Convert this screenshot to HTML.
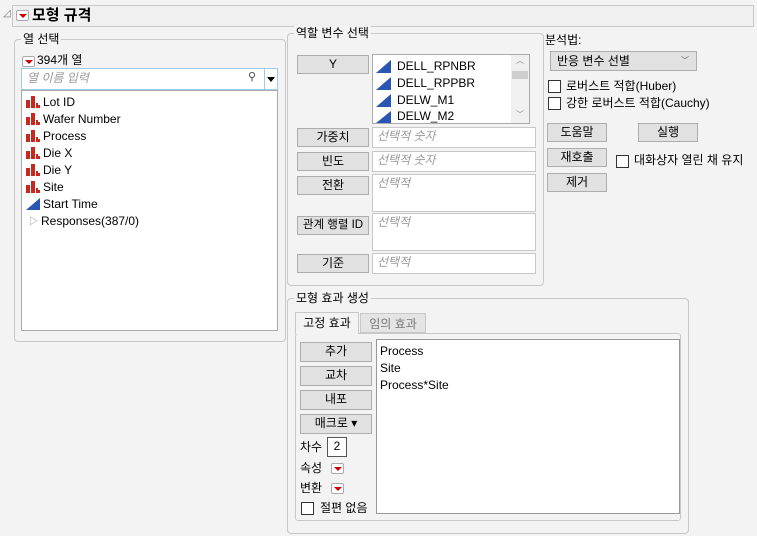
<!DOCTYPE html>
<html><head><meta charset="utf-8"><style>
*{box-sizing:border-box;margin:0;padding:0}
body{width:757px;height:536px;background:#f3f3f3;font-family:"Liberation Sans","Noto Sans CJK KR",sans-serif;font-size:12px;color:#000;position:relative;overflow:hidden}
.a{position:absolute}
.grp{position:absolute;border:1px solid #c8c8c8;border-radius:4px}
.lg{position:absolute;background:#f3f3f3;padding:0 2px;top:-8px;left:6px;font-size:12px;line-height:14px}
.btn{position:absolute;background:#e1e1e1;border:1px solid #adadad;text-align:center;line-height:16px;font-size:12px}
.inp{position:absolute;background:#fff;border:1px solid #c8c8c8;color:#9a9a9a;font-style:italic;padding-left:4px;line-height:17px}
.cb{position:absolute;width:13px;height:13px;border:1px solid #333;background:#fff}
.tri{display:inline-block;width:13px;height:11px;border:1px solid #aaa;border-radius:2px;background:#fff;position:relative;vertical-align:middle}
.tri:after{content:"";position:absolute;left:2px;top:3px;border-left:4px solid transparent;border-right:4px solid transparent;border-top:4px solid #c00}
.nom{position:absolute;left:4px;width:14px;height:12px}
.it{position:absolute;left:21px;line-height:16px}
</style></head><body>
<div class="a" style="left:3px;top:8px;font-size:10px;color:#777">◿</div>
<div class="a" style="left:12px;top:5px;width:742px;height:22px;border:1px solid #c8c8c8;background:#f0f0f0"></div>
<div class="a" style="left:16px;top:8px"><span class="tri"></span></div>
<div class="a" style="left:32px;top:6px;font-size:15px;font-weight:bold;line-height:20px">모형 규격</div>

<div class="grp" style="left:14px;top:39px;width:272px;height:303px"><div class="lg">열 선택</div></div>
<div class="a" style="left:22px;top:54px"><span class="tri"></span></div>
<div class="a" style="left:37px;top:52px;line-height:16px">394개 열</div>
<div class="a" style="left:21px;top:68px;width:257px;height:22px;background:#fff;border:1px solid #9ccbe8"></div>
<div class="a" style="left:27px;top:70px;color:#999;font-style:italic;line-height:16px">열 이름 입력</div>
<div class="a" style="left:248px;top:70px;color:#444;font-size:11px">⚲</div>
<div class="a" style="left:264px;top:69px;width:1px;height:20px;background:#9ccbe8"></div>
<div class="a" style="left:267px;top:77px;border-left:4px solid transparent;border-right:4px solid transparent;border-top:5px solid #000"></div>
<div class="a" style="left:21px;top:90px;width:257px;height:241px;background:#fff;border:1px solid #aaa">
<svg class="nom" style="top:5px" viewBox="0 0 14 12"><path d="M0 4h4v8H0zM5 0h4v12H5zM10 7h2v5h-2zM12 9h2v3h-2z" fill="#c8281e"/></svg><div class="it" style="top:3px">Lot ID</div>
<svg class="nom" style="top:22px" viewBox="0 0 14 12"><path d="M0 4h4v8H0zM5 0h4v12H5zM10 7h2v5h-2zM12 9h2v3h-2z" fill="#c8281e"/></svg><div class="it" style="top:20px">Wafer Number</div>
<svg class="nom" style="top:39px" viewBox="0 0 14 12"><path d="M0 4h4v8H0zM5 0h4v12H5zM10 7h2v5h-2zM12 9h2v3h-2z" fill="#c8281e"/></svg><div class="it" style="top:37px">Process</div>
<svg class="nom" style="top:56px" viewBox="0 0 14 12"><path d="M0 4h4v8H0zM5 0h4v12H5zM10 7h2v5h-2zM12 9h2v3h-2z" fill="#c8281e"/></svg><div class="it" style="top:54px">Die X</div>
<svg class="nom" style="top:73px" viewBox="0 0 14 12"><path d="M0 4h4v8H0zM5 0h4v12H5zM10 7h2v5h-2zM12 9h2v3h-2z" fill="#c8281e"/></svg><div class="it" style="top:71px">Die Y</div>
<svg class="nom" style="top:90px" viewBox="0 0 14 12"><path d="M0 4h4v8H0zM5 0h4v12H5zM10 7h2v5h-2zM12 9h2v3h-2z" fill="#c8281e"/></svg><div class="it" style="top:88px">Site</div>
<svg class="nom" style="top:107px" viewBox="0 0 14 12"><path d="M0 12L14 0v12z" fill="#2a55b0"/></svg><div class="it" style="top:105px">Start Time</div>
<div class="a" style="left:7px;top:123px;color:#888;font-size:9px">▷</div><div class="it" style="top:122px;left:19px">Responses(387/0)</div>
</div>

<div class="grp" style="left:287px;top:33px;width:257px;height:253px"><div class="lg">역할 변수 선택</div></div>
<div class="btn" style="left:297px;top:55px;width:72px;height:19px">Y</div>
<div class="a" style="left:372px;top:54px;width:158px;height:70px;background:#fff;border:1px solid #aaa;overflow:hidden">
<div class="a" style="right:0;top:0;width:18px;height:68px;background:#f0f0f0"></div>
<div class="a" style="right:1px;top:16px;width:16px;height:8px;background:#cdcdcd"></div>
<div class="a" style="right:5px;top:0;font-size:8px;color:#888">︿</div>
<div class="a" style="right:5px;top:54px;font-size:8px;color:#888">﹀</div>
<svg class="a" style="left:3px;top:5px" width="15" height="13"><path d="M0 13L15 0v13z" fill="#2a55b0"/></svg><div class="a" style="left:24px;top:3px;line-height:16px">DELL_RPNBR</div>
<svg class="a" style="left:3px;top:22px" width="15" height="13"><path d="M0 13L15 0v13z" fill="#2a55b0"/></svg><div class="a" style="left:24px;top:20px;line-height:16px">DELL_RPPBR</div>
<svg class="a" style="left:3px;top:39px" width="15" height="13"><path d="M0 13L15 0v13z" fill="#2a55b0"/></svg><div class="a" style="left:24px;top:37px;line-height:16px">DELW_M1</div>
<svg class="a" style="left:3px;top:56px" width="15" height="12"><path d="M0 12L15 0v12z" fill="#2a55b0"/></svg><div class="a" style="left:24px;top:53px;line-height:16px">DELW_M2</div>
</div>
<div class="btn" style="left:297px;top:128px;width:72px;height:19px">가중치</div><div class="inp" style="left:372px;top:127px;width:164px;height:21px">선택적 숫자</div>
<div class="btn" style="left:297px;top:152px;width:72px;height:19px">빈도</div><div class="inp" style="left:372px;top:151px;width:164px;height:21px">선택적 숫자</div>
<div class="btn" style="left:297px;top:176px;width:72px;height:19px">전환</div><div class="inp" style="left:372px;top:174px;width:164px;height:38px">선택적</div>
<div class="btn" style="left:297px;top:216px;width:72px;height:19px;font-size:11.5px;white-space:nowrap">관계 행렬 ID</div><div class="inp" style="left:372px;top:213px;width:164px;height:38px">선택적</div>
<div class="btn" style="left:297px;top:254px;width:72px;height:19px">기준</div><div class="inp" style="left:372px;top:253px;width:164px;height:21px">선택적</div>

<div class="a" style="left:545px;top:32px;line-height:16px">분석법:</div>
<div class="btn" style="left:550px;top:51px;width:147px;height:20px;text-align:left;padding-left:6px;line-height:18px">반응 변수 선별<span class="a" style="right:7px;top:0;font-size:8px;color:#555">﹀</span></div>
<div class="cb" style="left:548px;top:80px"></div><div class="a" style="left:566px;top:78px;line-height:16px">로버스트 적합(Huber)</div>
<div class="cb" style="left:548px;top:97px"></div><div class="a" style="left:566px;top:95px;line-height:16px">강한 로버스트 적합(Cauchy)</div>
<div class="btn" style="left:547px;top:123px;width:60px;height:19px">도움말</div>
<div class="btn" style="left:638px;top:123px;width:60px;height:19px">실행</div>
<div class="btn" style="left:547px;top:148px;width:60px;height:19px">재호출</div>
<div class="cb" style="left:616px;top:155px"></div><div class="a" style="left:634px;top:152px;line-height:16px;white-space:nowrap">대화상자 열린 채 유지</div>
<div class="btn" style="left:547px;top:173px;width:60px;height:19px">제거</div>

<div class="grp" style="left:287px;top:298px;width:402px;height:236px"><div class="lg">모형 효과 생성</div></div>
<div class="a" style="left:295px;top:333px;width:386px;height:188px;border:1px solid #c8c8c8;border-radius:3px"></div>
<div class="a" style="left:295px;top:312px;width:64px;height:22px;border:1px solid #c8c8c8;border-bottom:none;background:#f3f3f3;text-align:center;line-height:20px">고정 효과</div>
<div class="a" style="left:360px;top:313px;width:66px;height:20px;border:1px solid #c8c8c8;background:#e4e4e4;color:#777;text-align:center;line-height:20px">임의 효과</div>
<div class="btn" style="left:300px;top:342px;width:72px;height:20px">추가</div>
<div class="btn" style="left:300px;top:366px;width:72px;height:20px">교차</div>
<div class="btn" style="left:300px;top:390px;width:72px;height:20px">내포</div>
<div class="btn" style="left:300px;top:414px;width:72px;height:20px">매크로 ▾</div>
<div class="a" style="left:300px;top:439px;line-height:16px">차수</div>
<div class="a" style="left:327px;top:437px;width:20px;height:20px;background:#fff;border:1px solid #555;text-align:center;line-height:16px">2</div>
<div class="a" style="left:300px;top:460px;line-height:16px">속성</div><div class="a" style="left:331px;top:461px"><span class="tri"></span></div>
<div class="a" style="left:300px;top:480px;line-height:16px">변환</div><div class="a" style="left:331px;top:481px"><span class="tri"></span></div>
<div class="cb" style="left:301px;top:502px"></div><div class="a" style="left:320px;top:500px;line-height:16px">절편 없음</div>
<div class="a" style="left:376px;top:339px;width:304px;height:175px;background:#fff;border:1px solid #999">
<div class="a" style="left:3px;top:3px;line-height:16px">Process</div>
<div class="a" style="left:3px;top:20px;line-height:16px">Site</div>
<div class="a" style="left:3px;top:37px;line-height:16px">Process*Site</div>
</div>
</body></html>
